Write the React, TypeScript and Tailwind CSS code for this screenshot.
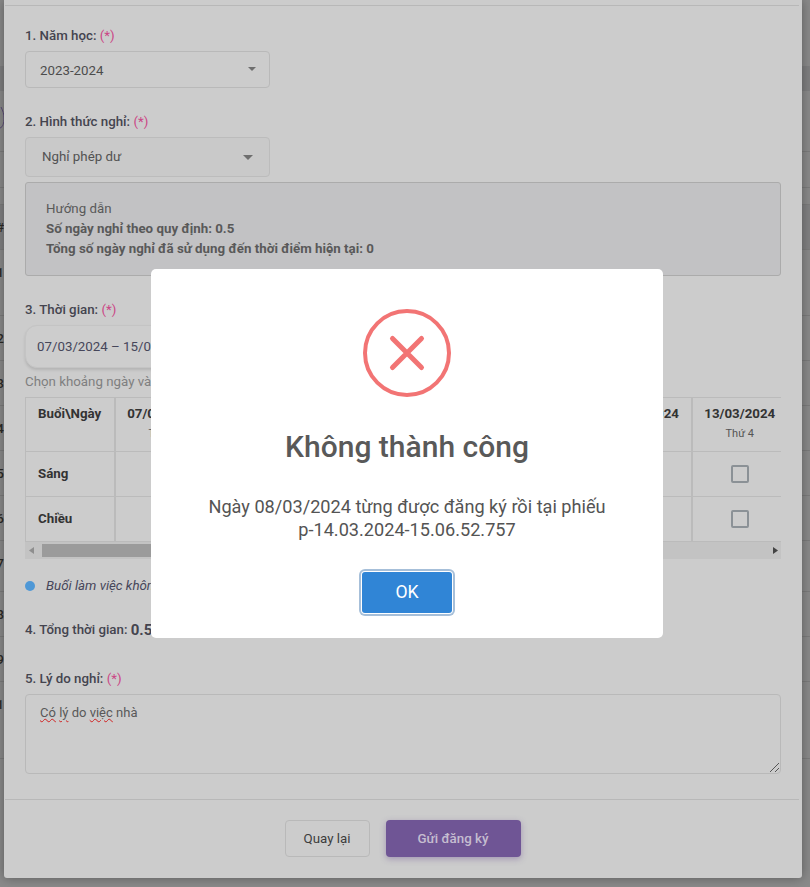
const dates = [
  ['07/03/2024', 'Thứ 5'],
  ['08/03/2024', 'Thứ 6'],
  ['09/03/2024', 'Thứ 7'],
  ['10/03/2024', 'Chủ nhật'],
  ['11/03/2024', 'Thứ 2'],
  ['12/03/2024', 'Thứ 3'],
  ['13/03/2024', 'Thứ 4'],
];

const backdropRows = [
  { h: 'h-[66px]', cls: '', no: '' },
  { h: 'h-[25px]', cls: 'bg-[#7f7f80]', no: '' },
  { h: 'h-[61px] border-b border-[#7c7c7c]', cls: '', no: '' },
  { h: 'h-[36px] border-b border-[#7c7c7c]', cls: '', no: '' },
  { h: 'h-[17px] border-b border-[#7c7c7c]', cls: '', no: '' },
  { h: 'h-[45px] border-b border-[#7c7c7c]', cls: 'bg-[#818182]', no: '#' },
  { h: 'h-[66px] border-b border-[#7c7c7c]', cls: '', no: '1' },
  { h: 'h-[45px] border-b border-[#7c7c7c]', cls: '', no: '2' },
  { h: 'h-[45px] border-b border-[#7c7c7c]', cls: '', no: '3' },
  { h: 'h-[45px] border-b border-[#7c7c7c]', cls: '', no: '4' },
  { h: 'h-[45px] border-b border-[#7c7c7c]', cls: '', no: '5' },
  { h: 'h-[45px] border-b border-[#7c7c7c]', cls: '', no: '6' },
  { h: 'h-[51px] border-b border-[#7c7c7c]', cls: '', no: '7' },
  { h: 'h-[45px] border-b border-[#7c7c7c]', cls: '', no: '8' },
  { h: 'h-[45px] border-b border-[#7c7c7c]', cls: '', no: '9' },
  { h: 'h-[77px] border-b border-[#7c7c7c]', cls: '', no: '1' },
];

function Required() {
  return <span className="text-[#cb4585] font-normal"> (*)</span>;
}

function Label({ children }: { children: React.ReactNode }) {
  return <div className="h-[18px] pt-[1px] text-[13.3px] leading-[18px] font-medium text-[#44444f]">{children}</div>;
}

function Caret({ className }: { className: string }) {
  return (
    <svg className={className} viewBox="0 0 10 5" fill="#6e6e6e">
      <path d="M0 0h10L5 5z" />
    </svg>
  );
}

function Box() {
  return <div className="w-[18px] h-[18px] border-2 border-[#8b9196] rounded-[2px] mx-auto" />;
}

export default function App() {
  return (
    <div className="relative w-[810px] h-[887px] overflow-hidden bg-[#8a8a8a] font-['Roboto',sans-serif]">
      {/* page behind the dialog */}
      <div className="flex flex-col">
        {backdropRows.map((r, i) => (
          <div key={i} className={`${r.h} ${r.cls} pt-[14px] text-[13px] leading-[18px] text-[#2e2a26] font-medium`}>
            <span className="inline-block w-[4px] overflow-hidden whitespace-nowrap [direction:rtl]">{r.no}</span>
          </div>
        ))}
      </div>
      <svg className="absolute left-0 top-[106px] w-[5px] h-[24px]" viewBox="0 0 5 24" fill="none" stroke="#5b4a78" strokeWidth="1">
        <path d="M1 1 C3 5 4 8 4 12 C4 17 3 21 0 22" />
      </svg>

      {/* form dialog */}
      <div className="absolute left-[4px] top-0 w-[798px] h-[878px] bg-[#cccccc] rounded-b-[3px] shadow-[0_0_12px_rgba(0,0,0,0.35)] pt-[5px]">
        <div className="ml-[1px] mr-[3px] border-t border-[#b8b8b8]" />
        <div className="flex flex-col px-[21px] pt-[20px] w-[777px]">
          <Label>1. Năm học:<Required /></Label>
          <div className="mt-[7px] w-[245px] h-[37px] border border-[#b9b9b9] rounded-[4px] flex items-center justify-between pl-[14px] pr-[13px]">
            <span className="pt-[2px] text-[13.3px] text-[#4c4c4c]">2023-2024</span>
            <Caret className="w-[8px] h-[4px] mb-[2px]" />
          </div>

          <div className="mt-[24px]">
            <Label>2. Hình thức nghỉ:<Required /></Label>
          </div>
          <div className="mt-[7px] w-[245px] h-[40px] bg-[#c9c9c9] border border-[#bcbcbc] rounded-[4px] flex items-center justify-between pl-[16px] pr-[16px]">
            <span className="text-[13.3px] text-[#525252]">Nghỉ phép dư</span>
            <Caret className="w-[10px] h-[5px]" />
          </div>

          <div className="mt-[5px] w-[756px] h-[94px] bg-[#c2c2c4] border border-[#ababab] rounded-[3px] pl-[20px] pt-[16px] text-[13.3px] leading-[20px] text-[#595959]">
            <div className="font-normal">Hướng dẫn</div>
            <div className="font-bold">Số ngày nghỉ theo quy định: 0.5</div>
            <div className="font-bold">Tổng số ngày nghỉ đã sử dụng đến thời điểm hiện tại: 0</div>
          </div>

          <div className="mt-[24px]">
            <Label>3. Thời gian:<Required /></Label>
          </div>
          <div className="mt-[7px] w-[245px] h-[43px] bg-[#cdcdcd] border border-[#c4c4c4] rounded-[12px] shadow-[0_2px_3px_rgba(0,0,0,0.12)] flex items-center pl-[11px]">
            <span className="text-[13.3px] text-[#46465a]">07/03/2024 – 15/03/2024</span>
          </div>
          <div className="mt-[6px] h-[16px] text-[13.3px] leading-[16px] text-[#7f7f80]">Chọn khoảng ngày và buổi nghỉ</div>

          <div className="mt-[7px] w-[756px] overflow-hidden">
            <table className="table-fixed border-collapse w-[762.4px] text-[13.3px] border-t border-l border-[#bbbbbb]">
              <colgroup>
                <col className="w-[89px]" />
                {dates.map((d) => (
                  <col key={d[0]} className="w-[96.2px]" />
                ))}
              </colgroup>
              <thead>
                <tr className="h-[54px] border-b border-[#bbbbbb]">
                  <th className="align-top pt-[7px] pl-[12px] text-left font-bold leading-[18px] text-[#333] border-r-2 border-[#bbbbbb]">Buổi\Ngày</th>
                  {dates.map((d) => (
                    <th key={d[0]} className="align-top pt-[7px] font-bold leading-[18px] text-[#333] border-r-2 border-[#bbbbbb]">
                      {d[0]}
                      <div className="mt-[3px] text-[11px] leading-[16px] font-normal text-[#555]">{d[1]}</div>
                    </th>
                  ))}
                </tr>
              </thead>
              <tbody>
                {['Sáng', 'Chiều'].map((s) => (
                  <tr key={s} className="h-[45px] border-b border-[#bbbbbb]">
                    <td className="pl-[12px] font-bold text-[#333] border-r-2 border-[#bbbbbb]">{s}</td>
                    {dates.map((d) => (
                      <td key={d[0]} className="border-r-2 border-[#bbbbbb]">
                        <Box />
                      </td>
                    ))}
                  </tr>
                ))}
              </tbody>
            </table>
            <div className="h-[17px] bg-[#c3c3c3] flex items-center justify-between pl-[4px] pr-[3px]">
              <div className="flex items-center">
                <svg className="w-[5px] h-[7px]" viewBox="0 0 5 7" fill="#8e8e8e"><path d="M5 0v7L0 3.5z" /></svg>
                <div className="ml-[8px] w-[560px] h-[13px] bg-[#9b9b9b]" />
              </div>
              <svg className="w-[5px] h-[7px]" viewBox="0 0 5 7" fill="#444"><path d="M0 0v7l5-3.5z" /></svg>
            </div>
          </div>

          <div className="mt-[18px] flex items-center h-[18px] text-[13.3px] italic text-[#46465a]">
            <span className="w-[10px] h-[10px] rounded-full bg-[#4f98d6] mr-[11px]" />
            Buổi làm việc không được chọn
          </div>

          <div className="mt-[25px] h-[20px] flex items-center text-[13.3px] font-medium text-[#44444f]">
            4. Tổng thời gian:&nbsp;<span className="text-[15px] font-bold">0.5 ngày</span>
          </div>

          <div className="mt-[29px]">
            <Label>5. Lý do nghỉ:<Required /></Label>
          </div>
          <div className="relative mt-[7px] w-[756px] h-[80px] border border-[#b9b9b9] rounded-[4px] pl-[14px] pt-[8px] text-[13px] leading-[20px] text-[#595959]">
            <span className="underline decoration-wavy decoration-[#d02020] decoration-1">Có</span>{' '}
            <span className="underline decoration-wavy decoration-[#d02020] decoration-1">lý</span> do{' '}
            <span className="underline decoration-wavy decoration-[#d02020] decoration-1">việc</span> nhà
            <svg className="absolute right-[1px] bottom-[1px] w-[9px] h-[9px]" viewBox="0 0 9 9" stroke="#555" strokeWidth="1">
              <path d="M0 9 9 0M5 9l4-4" />
            </svg>
          </div>
        </div>

        <div className="mt-[25px] ml-[1px] mr-[3px] border-t border-[#b8b8b8]" />
        <div className="flex justify-center gap-[16px] pt-[20px] pr-[1px]">
          <button className="w-[85px] h-[37px] border border-[#b9b9b9] rounded-[4px] text-[13.3px] text-[#3d3d3d]">Quay lại</button>
          <button className="w-[135px] h-[37px] rounded-[4px] bg-[#6f5595] text-[13.3px] font-medium text-[#c5bdd0] shadow-[0_2px_6px_rgba(111,85,149,0.45)]">Gửi đăng ký</button>
        </div>
      </div>

      {/* error alert */}
      <div className="absolute left-[151px] top-[269px] w-[512px] h-[369px] bg-white rounded-[5px] flex flex-col items-center pt-[40px]">
        <svg className="w-[88px] h-[88px]" viewBox="0 0 88 88" fill="none" stroke="#f27474">
          <circle cx="44" cy="44" r="42" strokeWidth="4" />
          <path d="M29.5 29.5 58.5 58.5M58.5 29.5 29.5 58.5" strokeWidth="5" strokeLinecap="round" />
        </svg>
        <h2 className="mt-[32px] h-[36px] text-[30px] leading-[36px] font-medium text-[#595959]">Không thành công</h2>
        <p className="mt-[31px] text-center text-[18.15px] leading-[22.5px] text-[#545454]">
          Ngày 08/03/2024 từng được đăng ký rồi tại phiếu
          <br />
          p-14.03.2024-15.06.52.757
        </p>
        <button className="mt-[31px] w-[90px] h-[41px] rounded-[3px] bg-[#3085d6] text-[17.6px] text-white shadow-[0_0_0_1px_#ffffff,0_0_0_3px_#a6bfd9]">OK</button>
      </div>
    </div>
  );
}
